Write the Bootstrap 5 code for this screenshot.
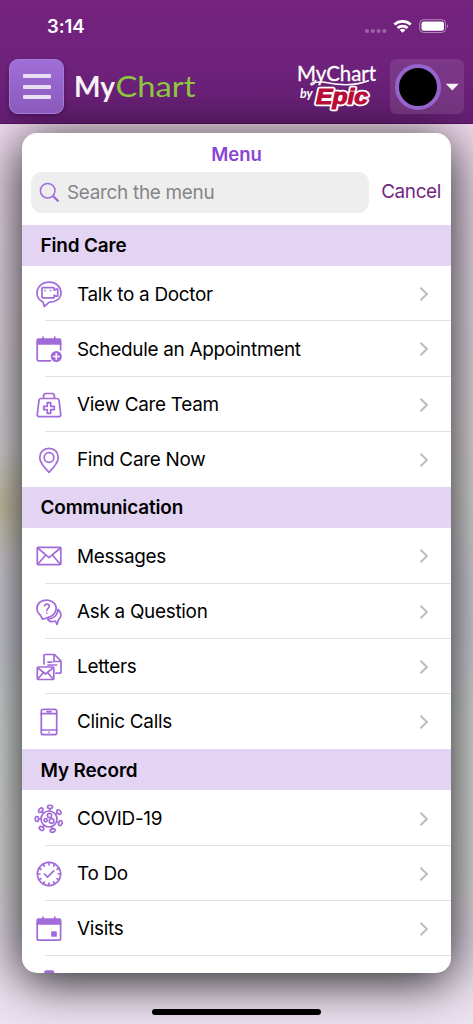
<!DOCTYPE html>
<html lang="en">
<head>
<meta charset="utf-8">
<meta name="viewport" content="width=device-width, initial-scale=1">
<title>MyChart Menu</title>
<link href="https://cdn.jsdelivr.net/npm/bootstrap@5.3.0/dist/css/bootstrap.min.css" rel="stylesheet">
<style>
  body { font-family: Inter, sans-serif; height: 1024px; overflow: hidden; color: #000;
    background: radial-gradient(ellipse 60px 55px at 0 505px, rgba(205,195,155,.75), rgba(205,195,155,0)),
      linear-gradient(180deg, #f0dbee 124px, #e6d8e7 230px, #e0d9e0 400px, #dad8d8 500px, #d5d2da 570px, #d2d2dd 640px, #d6dbd8 720px, #dadada 870px, #e3d9e7 940px, #eee2f0 1000px, #eee3f1 1024px); }
  .app-top { height: 124px; background: linear-gradient(180deg, #74237f 0, #6f227c 60px, #651e73 124px); border-bottom: 1px solid #56155f; }
  .status { height: 52px; padding: 0 25px 0 47px; }
  .clock { font-size: 18.5px; font-weight: 600; letter-spacing: -.1px; padding-top: 1px; }
  .brand-row { height: 71px; padding: 0 9px 2px; }
  .burger { width: 55px; height: 55px; border-radius: 9px; border: 1px solid #a57bd8; background: linear-gradient(#a06ed8, #8a5abc); box-shadow: 0 2px 5px rgba(40,0,50,.45); gap: 6.5px; }
  .burger i { display: block; width: 28px; height: 4px; border-radius: 1px; background: #e9def5; }
  .user-box { width: 74px; height: 55px; border-radius: 6px; background: rgba(255,255,255,.1); padding-left: 5px; }
  .avatar { width: 46px; height: 46px; border: 4px solid #9564cc; background: #000; }
  .sheet { width: 429px; height: 840px; margin: 9px 0 0 22px; border-radius: 15px; background: #fff; box-shadow: 0 8px 50px rgba(0,0,0,.88); }
  .sheet-head { height: 91.8px; padding: 8px 9px 0; }
  .sheet-title { font-size: 18.5px; line-height: 26px; font-weight: 600; color: #8c44d3; letter-spacing: 0; }
  .search-row { margin-top: 5px; }
  .search-box { width: 338px; height: 41px; border-radius: 11px; background: #eee; color: #858589; padding-left: 8px; font-size: 18.9px; letter-spacing: -.28px; }
  .search-box .t { padding-top: 2px; }
  .cancel { font-size: 18.9px; letter-spacing: -.35px; color: #712482; line-height: 40px; padding-right: 1px; }
  .section-head { height: 41.4px; background: #e3d4f3; padding: 2px 0 0 18.5px; font-size: 18.9px; font-weight: 600; letter-spacing: -.12px; }
  .menu-row { height: 55.2px; padding: 1px 22px 0 12px; font-size: 18.9px; letter-spacing: -.28px; position: relative; }
  .menu-row .t { padding-top: 1px; }
  .menu-row.ruled::after { content: ""; position: absolute; left: 23px; right: 0; bottom: 0; height: 1px; background: #e2e2e4; }
  .menu-row .glyph { width: 30px; height: 30px; margin-right: 13px; flex: none; fill: none; stroke: #a26bda; stroke-width: 1.7; stroke-linecap: round; stroke-linejoin: round; }
  .glyph .solid { fill: #a26bda; }
  .menu-row .chev { width: 10px; height: 16px; fill: none; stroke: #bdbdc0; stroke-width: 2; }
  .t { white-space: nowrap; }
  .home-bar { width: 169px; height: 6px; margin: 35.5px 0 0 152px; border-radius: 3px; background: #000; position: relative; }
</style>
</head>
<body>
<header class="app-top text-white">
  <div class="status d-flex justify-content-between align-items-center">
    <span class="clock">3:14</span>
    <svg width="86" height="20" viewBox="0 0 86 20">
      <g fill="#fff" opacity=".3"><circle cx="5" cy="15" r="2.1"/><circle cx="10.800" cy="15" r="2.1"/><circle cx="16.600" cy="15" r="2.1"/><circle cx="22.400" cy="15" r="2.1"/></g>
      <g transform="translate(0 1)">
      <g fill="none" stroke="#fff" stroke-width="2.7"><path d="M32.400 7.500a12.300 12.300 0 0 1 16.400 0M35.500 11a7.700 7.700 0 0 1 10.200 0"/></g>
      <path d="M37.700 13a4.400 4.400 0 0 1 5.800 0l-2.900 2.800z" fill="#fff"/>
      <rect x="57.700" y="2.700" width="26" height="12.800" rx="4" fill="none" stroke="#fff" stroke-opacity=".45"/>
      <rect x="59.500" y="4.400" width="22.500" height="9.400" rx="2.300" fill="#fff"/>
      <path d="M85 7.200v4q1.800-2 0-4" fill="#fff" opacity=".5"/>
      </g>
    </svg>
  </div>
  <div class="brand-row d-flex align-items-center">
    <div class="burger d-flex flex-column align-items-center justify-content-center"><i></i><i></i><i></i></div>
    <svg class="ms-2" width="130" height="44" viewBox="0 0 130 44" font-family="Lato">
      <text x="2" y="32" font-size="29" font-weight="700" fill="#f5f1f5" textLength="41" lengthAdjust="spacingAndGlyphs">My</text>
      <text x="43.500" y="32" font-size="29" fill="#8dc63f" textLength="80" lengthAdjust="spacingAndGlyphs">Chart</text>
    </svg>
    <svg class="ms-auto" width="88" height="54" viewBox="0 0 88 54">
      <text x="3" y="21" font-family="Lato" font-size="21" fill="#fff" stroke="#fff" stroke-width=".3" textLength="79" lengthAdjust="spacingAndGlyphs">MyChart</text>
      <path d="M22 20q-2 5.500-5 4.500q-1-3 12-2.500q28 6 46-1.500" fill="none" stroke="#fff" stroke-width="1.500"/>
      <text x="6" y="38" font-family="Lato" font-style="italic" font-weight="700" font-size="12.500" fill="#fff">by</text>
      <text x="22" y="44" font-family="Liberation Sans" font-style="italic" font-weight="700" font-size="22" fill="#b80d38" stroke="#fff" stroke-width="4.400" stroke-linejoin="round" paint-order="stroke" textLength="52" lengthAdjust="spacingAndGlyphs">Epic</text>
      <text x="22" y="44" font-family="Liberation Sans" font-style="italic" font-weight="700" font-size="22" fill="#b80d38" stroke="#b80d38" stroke-width="1" textLength="52" lengthAdjust="spacingAndGlyphs" aria-hidden="true">Epic</text>
    </svg>
    <div class="user-box d-flex align-items-center ms-2">
      <div class="avatar rounded-circle"></div>
      <svg class="ms-1" width="15" height="8" viewBox="0 0 15 8"><path d="M.8.8h13L7.300 7.400z" fill="#f5f0f5"/></svg>
    </div>
  </div>
</header>

<main class="sheet overflow-hidden">
  <div class="sheet-head">
    <div class="sheet-title text-center"><span class="t">Menu</span></div>
    <div class="search-row d-flex justify-content-between">
      <div class="search-box d-flex align-items-center">
        <svg width="28" height="21" viewBox="0 0 28 21" fill="none" stroke="#a26bda"><circle cx="8.700" cy="8.700" r="7.300" stroke-width="1.500"/><path d="M14 14l5.500 5.300" stroke-width="2.300"/></svg>
        <span class="t">Search the menu</span>
      </div>
      <span class="cancel t">Cancel</span>
    </div>
  </div>
  <div id="menu"></div>
</main>
<div class="home-bar"></div>

<script src="https://cdn.jsdelivr.net/npm/bootstrap@5.3.0/dist/js/bootstrap.bundle.min.js"></script>
<script>
  const virusArms = [5, 55, 110, 162, 218, 270, 317].map(a =>
    `<g transform="rotate(${a} 15 15)"><path d="M15 6.800v-2.200"/><ellipse cx="15" cy="2.900" rx="2.500" ry="1.700"/></g>`).join('');
  const clockTicks = Array.from({length: 12}, (_, i) =>
    `<path d="M15 3.500v2.300" transform="rotate(${i * 30} 15 15)"/>`).join('');
  const icons = {
    doctor: '<path d="M8 22.500C4.700 20.600 3 17.800 3 14.300C3 8 8 3.200 15.200 3.200S27 8 27 14S21.500 23 15 23.300L10.200 27.500L9.200 23.300Z"/><path d="M9 8.700h10.200q1 0 1 1v1.500l1.800-1h1.700v7h-1.700l-1.800-1v1.700q0 1-1 1H9q-1 0-1-1V9.700q0-1 1-1zM11 11.500h.1M16.500 11.500h.1"/>',
    schedule: '<path class="solid" d="M3.200 6.200q0-1.200 1.200-1.200h21q1.200 0 1.200 1.200v3.800H3.200z"/><path d="M9 5V3M20.800 5V3M3.200 9v16q0 1.800 1.800 1.800h11.500M26.600 9v7"/><circle class="solid" cx="22.300" cy="22.500" r="4.700"/><path d="M22.300 19.800v5.400M19.600 22.500H25" stroke="#fff" stroke-width="1.600"/>',
    team: '<path d="M9.600 8V6q0-2.500 2.500-2.500h5.800q2.500 0 2.500 2.500v2M7 8.500h16q1.700 0 2 1.700l1.700 14q.2 2.500-2.200 2.500h-19q-2.400 0-2.200-2.500l1.700-14q.3-1.700 2-1.700z"/><path d="M13.300 12.700h3.400v3.600h3.600v3.400h-3.600v3.600h-3.400v-3.600H9.700v-3.400h3.600z"/>',
    pin: '<path d="M15 27.300Q5.700 18 5.700 12.500C5.700 7.200 9.700 3.400 15 3.400s9.300 3.800 9.300 9.100Q24.300 18 15 27.300z"/><circle cx="15" cy="12.500" r="4.800"/>',
    mail: '<rect x="3.300" y="6.300" width="23.500" height="17.300" rx=".8"/><path d="M3.700 7l11.300 9.600L26.400 7M3.700 23.200l8-9.200M26.400 23.200l-8-9.200"/>',
    ask: '<path d="M6.500 18.300C1.500 14.500 2 8 6.200 5C11 1.700 18 3 20.800 7C24 12 21 18.700 14.500 20.200L8.700 22.300Z"/><path d="M10.500 8.800c.7-2.300 4.800-2.200 4.800.5 0 2-2.500 2-2.500 4.200M12.800 16h.1"/><path d="M24 12.500C28 15.500 27.800 20 24.500 22.800L23 27.500L21.500 24C18.500 25 15 24.800 13.500 22C19 22 23.500 19 24 12.500"/>',
    letters: '<rect x="3.300" y="15" width="16.500" height="12.500" rx="1"/><path d="M4 16l7.500 6L19 16M4 26.800l5-5.800M19 26.800l-5-5.800M10 12V3.500q0-1 1-1h9.500L27 9.200v11q0 1-1 1h-4M20 2.800V9.500h6.500M14 10.200h4M14 13h8.500"/>',
    phone: '<rect x="7.300" y="2.400" width="15.400" height="25.300" rx="2"/><path d="M7.300 6.700h15.400M7.300 23h15.400M13 4.600h4M15 25.300h.1"/>',
    covid: '<circle cx="15" cy="15" r="8"/><circle cx="15.500" cy="11.400" r="2.100"/><circle cx="11.600" cy="16.300" r="1.600"/><circle cx="17.600" cy="17" r="2.300"/>' + virusArms,
    todo: '<circle cx="15" cy="15" r="11.600"/>' + clockTicks + '<path d="M10.500 15l3 3.100 6.200-6.300"/>',
    visits: '<path class="solid" d="M3.200 6.200q0-1.200 1.200-1.200h21q1.200 0 1.200 1.200v3.800H3.200z"/><path d="M9 5V3M20.800 5V3M3.200 9v15.500q0 1.700 1.700 1.700h20q1.700 0 1.700-1.700V9"/><rect class="solid" x="18" y="18" width="4" height="4"/>',
    results: '<path class="solid" d="M11 3.300q0-1.200 1.200-1.200h6q1.200 0 1.200 1.200v4H11z"/><rect x="6" y="5" width="18" height="22"/>'
  };
  const sections = [
    ['Find Care', [['doctor', 'Talk to a Doctor'], ['schedule', 'Schedule an Appointment'], ['team', 'View Care Team'], ['pin', 'Find Care Now']]],
    ['Communication', [['mail', 'Messages'], ['ask', 'Ask a Question'], ['letters', 'Letters'], ['phone', 'Clinic Calls']]],
    ['My Record', [['covid', 'COVID-19'], ['todo', 'To Do'], ['visits', 'Visits'], ['results', '']]]
  ];
  document.getElementById('menu').innerHTML = sections.map(([name, rows]) =>
    `<div class="section-head d-flex align-items-center"><span class="t">${name}</span></div>` +
    rows.map(([icon, label], i) =>
      `<div class="menu-row d-flex align-items-center ${i < 3 ? 'ruled' : ''}"><svg class="glyph" viewBox="0 0 30 30">${icons[icon]}</svg>${label ? `<span class="t">${label}</span><svg class="chev ms-auto" viewBox="0 0 10 16"><path d="M1.500 1.700L7.900 8l-6.400 6.300"/></svg>` : ''}</div>`).join('')
  ).join('');
</script>
</body>
</html>
